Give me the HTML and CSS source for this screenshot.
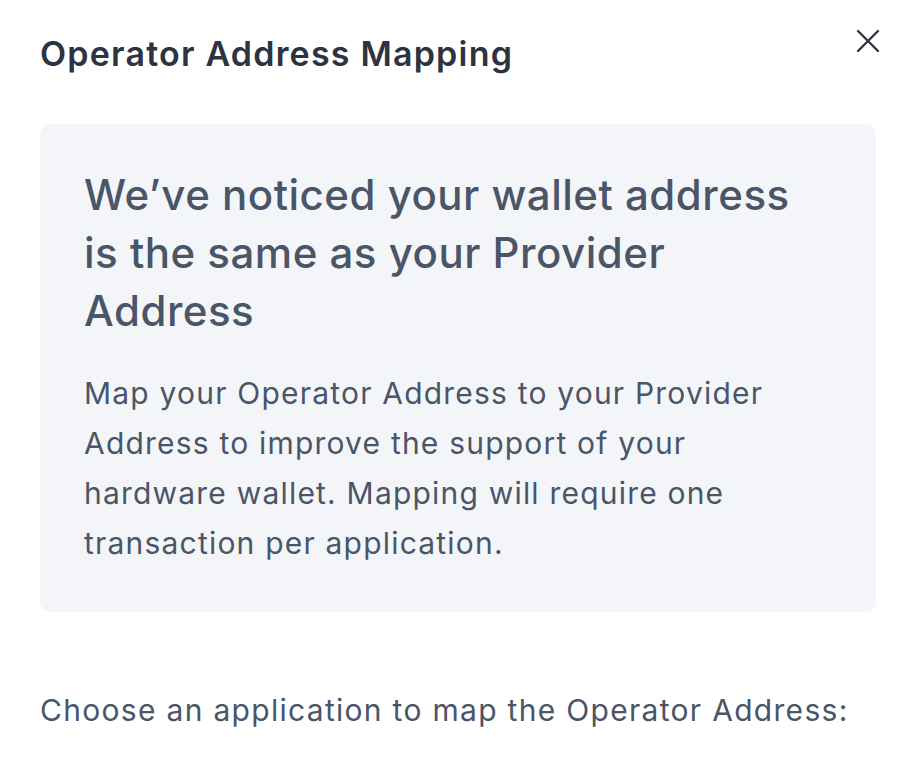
FILE: index.html
```html
<!DOCTYPE html>
<html lang="en">
<head>
<meta charset="utf-8">
<title>Operator Address Mapping</title>
<link rel="stylesheet" href="styles.css">
</head>
<body>
<div class="modal">
  <div class="modal-header">
    <h2 class="modal-title">Operator Address Mapping</h2>
    <button class="close-btn" aria-label="Close">
      <svg viewBox="0 0 24 24" width="24" height="24" fill="none" stroke="currentColor" stroke-width="2.3" stroke-linecap="round">
        <path d="M2 2L22 22M22 2L2 22"/>
      </svg>
    </button>
  </div>
  <div class="notice">
    <h3 class="notice-title">We’ve noticed your wallet address is the same as your Provider Address</h3>
    <p class="notice-text">Map your Operator Address to your Provider Address to improve the support of your hardware wallet. Mapping will require one transaction per application.</p>
  </div>
  <p class="choose">Choose an application to map the Operator Address:</p>
</div>
</body>
</html>
```

FILE: styles.css
```css
* { box-sizing: border-box; }
html, body { margin: 0; padding: 0; background: #ffffff; }
body {
  font-family: Inter, "Noto Sans", sans-serif;
  color: #4a5568;
}
.modal {
  padding: 34px 38px 0 40px;
}
.modal-header {
  display: flex;
  justify-content: space-between;
  align-items: flex-start;
}
.modal-title {
  margin: 0;
  font-size: 34px;
  line-height: 40px;
  font-weight: 600;
  letter-spacing: 1.2px;
  color: #2d3340;
}
.close-btn {
  border: 0;
  background: none;
  padding: 0;
  margin-top: -5px;
  margin-right: -4px;
  color: #2d3340;
  width: 24px;
  height: 24px;
  cursor: pointer;
}
.close-btn svg { display: block; }
.notice {
  margin-top: 50px;
  background: #f4f5f9;
  border-radius: 10px;
  padding: 42px 44px 44px 44px;
}
.notice-title {
  margin: 0;
  font-size: 42px;
  line-height: 58px;
  font-weight: 500;
  letter-spacing: 0.5px;
  color: #4a5568;
  max-width: 712px;
}
.notice-text {
  margin: 28px 0 0;
  font-size: 30px;
  line-height: 50px;
  font-weight: 400;
  letter-spacing: 1.2px;
  color: #4a5568;
  max-width: 700px;
}
.choose {
  margin: 73px 0 0;
  font-size: 30px;
  line-height: 50px;
  letter-spacing: 1.3px;
  color: #4a5568;
}
```
